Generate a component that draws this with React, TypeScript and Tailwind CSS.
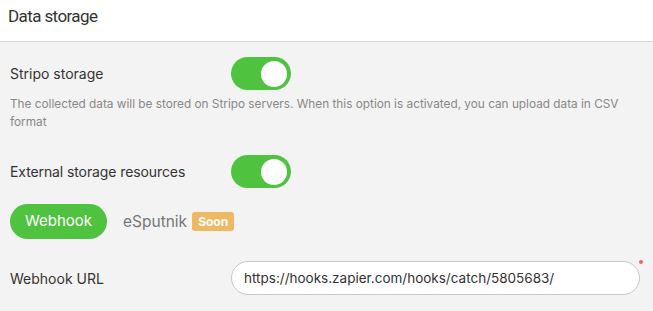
export default function App() {
  const Toggle = () => (
    <div className="w-[60px] h-[33px] rounded-full bg-[#4fc23f] flex items-center justify-end pr-[4px]">
      <div className="w-[26px] h-[26px] rounded-full bg-white" />
    </div>
  );

  return (
    <div className="w-[653px] h-[311px] bg-[#f3f3f3] font-['Inter','Liberation_Sans',sans-serif] text-[#333] overflow-hidden">
      <div className="h-[42px] bg-white border-b border-[#d9d9d9] flex items-center pl-[8px]">
        <h1 className="font-['Roboto',sans-serif] text-[17px] tracking-[-0.6px] text-[#333] -mt-[7px]">Data storage</h1>
      </div>
      <div className="pl-[10px] pt-[15px]">
        <div className="flex items-center">
          <span className="w-[221px] text-[14px]">Stripo storage</span>
          <Toggle />
        </div>
        <p className="mt-[5px] text-[11.8px] leading-[18px] text-[#888] w-[620px]">
          The collected data will be stored on Stripo servers. When this option is activated, you can upload data in CSV format
        </p>
        <div className="flex items-center mt-[24px]">
          <span className="w-[221px] text-[14px] tracking-[-0.1px]">External storage resources</span>
          <Toggle />
        </div>
        <div className="flex items-center mt-[16px]">
          <button className="w-[97px] h-[35px] rounded-full bg-[#4fc23f] text-white text-[15px]">Webhook</button>
          <span className="ml-[16px] text-[15.5px] text-[#777]">eSputnik</span>
          <span className="ml-[5px] h-[19px] px-[6px] rounded-[3px] bg-[#efb862] text-white text-[12px] font-bold flex items-center">Soon</span>
        </div>
        <div className="flex items-center mt-[22px]">
          <span className="w-[221px] text-[14px]">Webhook URL</span>
          <div className="relative">
            <div className="w-[409px] h-[34px] rounded-full bg-white border border-[#c8c8c8] flex items-center pl-[12px] text-[13.5px] text-[#333]">
              https://hooks.zapier.com/hooks/catch/5805683/
            </div>
            <span className="absolute -top-[1px] -right-[3px] w-[4px] h-[4px] rounded-full bg-[#ee6666]" />
          </div>
        </div>
      </div>
    </div>
  );
}
